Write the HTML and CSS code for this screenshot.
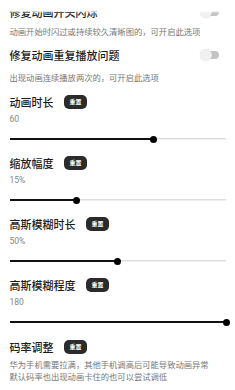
FILE: index.html
```html
<!DOCTYPE html>
<html lang="zh">
<head>
<meta charset="utf-8">
<link rel="stylesheet" href="styles.css">
</head>
<body>
<div class="fade"></div>
<main class="list">
  <section class="toggle-item is-clipped">
    <div class="row">
      <span class="title">修复动画开头闪烁</span>
      <span class="switch"><span class="knob"></span></span>
    </div>
    <p class="desc">动画开始时闪过或持续较久清晰图的，可开启此选项</p>
  </section>
  <section class="toggle-item">
    <div class="row">
      <span class="title">修复动画重复播放问题</span>
      <span class="switch"><span class="knob"></span></span>
    </div>
    <p class="desc">出现动画连续播放两次的，可开启此选项</p>
  </section>

  <section class="slider-item">
    <div class="head"><span class="title">动画时长</span><span class="badge">重置</span></div>
    <div class="value">60</div>
    <div class="slider"><div class="fill" style="width:66.4%"><span class="thumb"></span></div></div>
  </section>
  <section class="slider-item">
    <div class="head"><span class="title">缩放幅度</span><span class="badge">重置</span></div>
    <div class="value">15%</div>
    <div class="slider"><div class="fill" style="width:30.9%"><span class="thumb"></span></div></div>
  </section>
  <section class="slider-item">
    <div class="head"><span class="title">高斯模糊时长</span><span class="badge">重置</span></div>
    <div class="value">50%</div>
    <div class="slider"><div class="fill" style="width:49.8%"><span class="thumb"></span></div></div>
  </section>
  <section class="slider-item">
    <div class="head"><span class="title">高斯模糊程度</span><span class="badge">重置</span></div>
    <div class="value">180</div>
    <div class="slider"><div class="fill" style="width:100%"><span class="thumb"></span></div></div>
  </section>

  <section class="text-item">
    <div class="head"><span class="title">码率调整</span><span class="badge">重置</span></div>
    <p class="desc multi">华为手机需要拉满，其他手机调高后可能导致动画异常<br>默认码率也出现动画卡住的也可以尝试调低</p>
  </section>
</main>
</body>
</html>
```
FILE: styles.css
```css
html, body {
  margin: 0;
  padding: 0;
  background: #ffffff;
}
body {
  font-family: "Noto Sans CJK SC", "Noto Sans", sans-serif;
  color: #1e1e1e;
  width: 235px;
  height: 390px;
  overflow: hidden;
  position: relative;
}
.fade {
  position: absolute;
  left: 0;
  top: 0;
  width: 100%;
  height: 13px;
  background: linear-gradient(#ffffff 0, #ffffff 11px, rgba(255,255,255,0) 13px);
  z-index: 2;
}
.list {
  display: flex;
  flex-direction: column;
  gap: 10px;
  padding: 4px 9px 0 9.5px;
}
p { margin: 0; }
.title {
  font-size: 11px;
  line-height: 16px;
  font-weight: 500;
  color: #1c1c1c;
  white-space: nowrap;
}
.desc {
  font-size: 8.3px;
  line-height: 12px;
  color: #777777;
  white-space: nowrap;
  margin-top: 8px;
}
.toggle-item.is-clipped .desc {
  margin-top: 5px;
}
.row {
  display: flex;
  align-items: center;
  justify-content: space-between;
}
.switch {
  position: relative;
  width: 18px;
  height: 8px;
  border-radius: 4px;
  background: #c4c4c4;
  margin-right: 7px;
  display: flex;
  align-items: center;
}
.knob {
  width: 12px;
  height: 12px;
  border-radius: 50%;
  background: #f1f1f1;
  box-shadow: 0 0 1px rgba(0,0,0,0.18);
  margin-left: -1px;
}
.head {
  display: flex;
  align-items: center;
  gap: 10.5px;
}
.slider-item:first-of-type,
.toggle-item + .slider-item {
  margin-top: 1px;
}
.badge {
  display: inline-flex;
  align-items: center;
  justify-content: center;
  width: 23px;
  height: 14px;
  border-radius: 5px;
  background: #2b2b2b;
  color: #ffffff;
  font-size: 6px;
  font-weight: 700;
  line-height: 1;
}
.value {
  font-size: 8.5px;
  line-height: 12px;
  color: #858585;
  margin-top: 3px;
  font-family: "Roboto", "Noto Sans", sans-serif;
}
.slider {
  margin-top: 8px;
  height: 12px;
  display: flex;
  align-items: center;
  background: linear-gradient(#dddddd, #dddddd) center / 100% 1.5px no-repeat;
  width: 216.5px;
}
.fill {
  position: relative;
  height: 2px;
  background: #111111;
}
.thumb {
  position: absolute;
  right: -3.5px;
  top: -2.5px;
  width: 7px;
  height: 7px;
  border-radius: 50%;
  background: #000000;
}
.text-item {
  margin-top: 1px;
}
.text-item .desc.multi {
  margin-top: 2.5px;
}
```
